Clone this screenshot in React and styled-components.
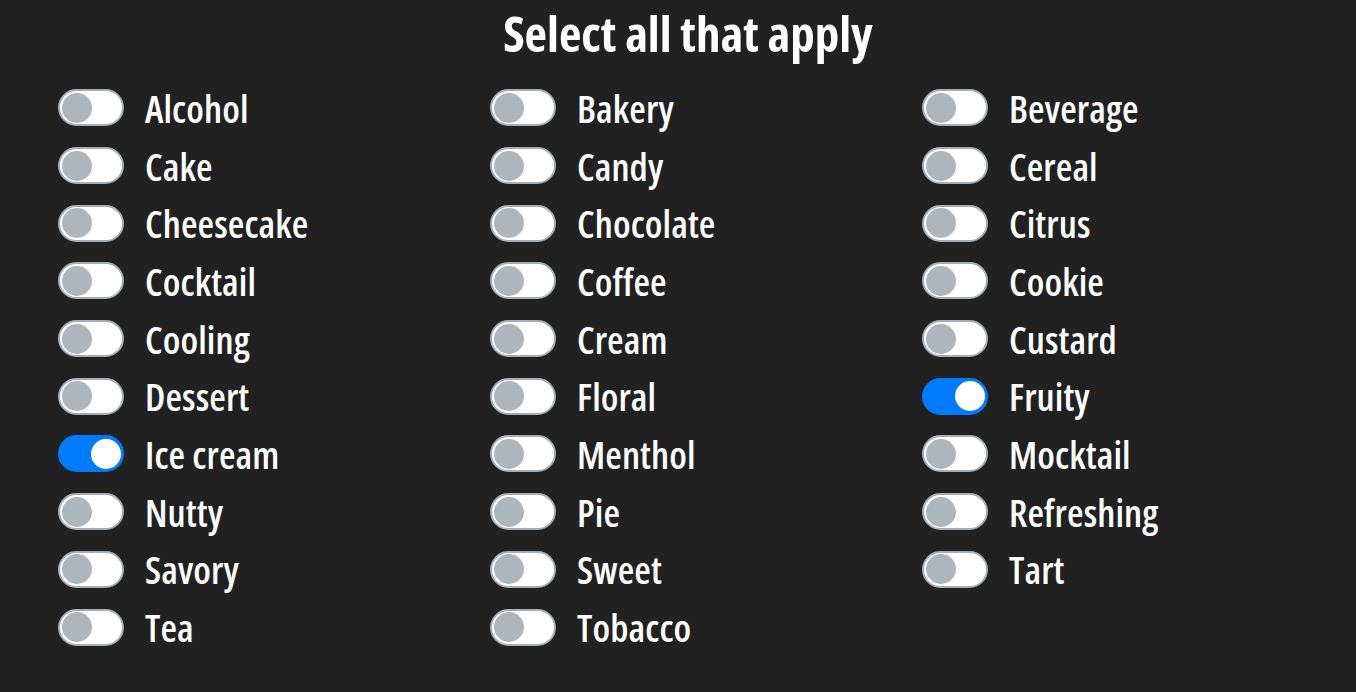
import styled, { createGlobalStyle } from "styled-components";

const GlobalStyle = createGlobalStyle`
  body {
    margin: 0;
    background: #212121;
    color: #fff;
    font-family: "Open Sans", "Roboto", sans-serif;
  }
`;

const Page = styled.div`
  padding: 3px 0 0 20px;
`;

const Title = styled.h1`
  margin: 0 0 16px;
  text-align: center;
  font-size: 49px;
  font-weight: 700;
  font-stretch: 75%;
  line-height: 60px;
`;

const Grid = styled.div`
  display: grid;
  grid-template-columns: repeat(3, 432px);
  grid-template-rows: repeat(10, 57.7px);
  padding-left: 38px;
`;

const Option = styled.label`
  display: flex;
  align-items: center;
  gap: 21px;
  cursor: pointer;
  grid-column: ${p => p.col};
  grid-row: ${p => p.row};
`;

const Switch = styled.span`
  position: relative;
  width: 66px;
  height: 37px;
  box-sizing: border-box;
  border-radius: 19px;
  border: 2px solid ${p => (p.on ? "#007bff" : "#a5adb6")};
  background: ${p => (p.on ? "#007bff" : "#fff")};
  flex-shrink: 0;

  &::after {
    content: "";
    position: absolute;
    top: 1.5px;
    left: ${p => (p.on ? "31px" : "1.5px")};
    width: 30px;
    height: 30px;
    border-radius: 50%;
    background: ${p => (p.on ? "#fff" : "#adb5bd")};
  }
`;

const Label = styled.span`
  font-size: 38px;
  font-weight: 600;
  font-stretch: 75%;
  line-height: 1;
  letter-spacing: 0.1px;
`;

const columns = [
  ["Alcohol", "Cake", "Cheesecake", "Cocktail", "Cooling", "Dessert", "Ice cream", "Nutty", "Savory", "Tea"],
  ["Bakery", "Candy", "Chocolate", "Coffee", "Cream", "Floral", "Menthol", "Pie", "Sweet", "Tobacco"],
  ["Beverage", "Cereal", "Citrus", "Cookie", "Custard", "Fruity", "Mocktail", "Refreshing", "Tart"],
];

const selected = ["Ice cream", "Fruity"];

export default function App() {
  return (
    <Page>
      <GlobalStyle />
      <Title>Select all that apply</Title>
      <Grid>
        {columns.map((col, ci) =>
          col.map((name, ri) => (
            <Option key={name} col={ci + 1} row={ri + 1}>
              <Switch on={selected.includes(name) ? 1 : 0} />
              <Label>{name}</Label>
            </Option>
          ))
        )}
      </Grid>
    </Page>
  );
}
